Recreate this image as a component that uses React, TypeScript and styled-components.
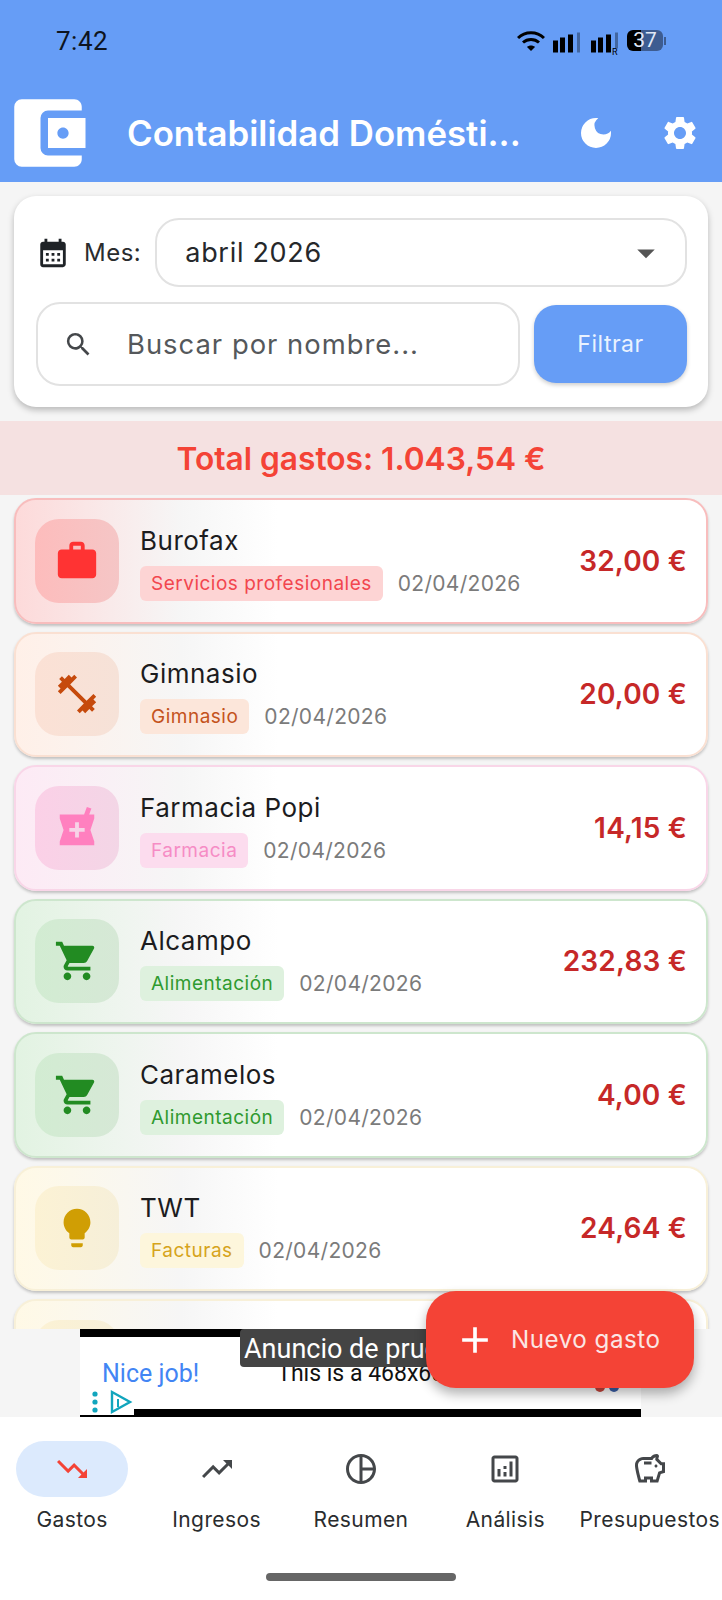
import styled, { createGlobalStyle } from "styled-components";
import {
    MdAccountBalanceWallet,
    MdAdd,
    MdArrowDropDown,
    MdCalendarMonth,
    MdDarkMode,
    MdFitnessCenter,
    MdLightbulb,
    MdLocalPharmacy,
    MdOutlineAnalytics,
    MdOutlinePieChart,
    MdOutlineSavings,
    MdSearch,
    MdSettings,
    MdShoppingCart,
    MdTrendingDown,
    MdTrendingUp,
    MdWork,
} from "react-icons/md";
import type { IconType } from "react-icons";

const GlobalStyle = createGlobalStyle`
    html, body {
        margin: 0;
        padding: 0;
        background: #ffffff;
        font-family: "Inter", "Liberation Sans", sans-serif;
    }
    * {
        box-sizing: border-box;
    }
`;

type Tint = {
    start: string;
    border: string;
    tile: string;
    tileEnd: string;
    icon: string;
    tag: string;
    tagText: string;
};

const red: Tint = { start: "#fddada", border: "#f8bdbd", tile: "#fdbcbc", tileEnd: "#f5c6c6", icon: "#ff3333", tag: "#fdd4d4", tagText: "#f2464e" };
const orange: Tint = { start: "#fff0e8", border: "#fae0d2", tile: "#fbe1d5", tileEnd: "#f6e2d8", icon: "#c64a0c", tag: "#fce6da", tagText: "#c4531c" };
const pink: Tint = { start: "#fdeaf5", border: "#f9d6e8", tile: "#fbd0e7", tileEnd: "#f3d6e6", icon: "#ff80bf", tag: "#fcdcee", tagText: "#f68cc5" };
const green: Tint = { start: "#e2f3e2", border: "#cde6cd", tile: "#d2ecd2", tileEnd: "#d6e8d6", icon: "#228b22", tag: "#def1de", tagText: "#2f9a2f" };
const yellow: Tint = { start: "#fff9e6", border: "#f8f0d8", tile: "#fcf2d4", tileEnd: "#f6efd9", icon: "#d09e04", tag: "#fdf6dc", tagText: "#d6a41c" };

const expenses = [
    { name: "Burofax", category: "Servicios profesionales", date: "02/04/2026", amount: "32,00 €", tint: red, Icon: MdWork },
    { name: "Gimnasio", category: "Gimnasio", date: "02/04/2026", amount: "20,00 €", tint: orange, Icon: MdFitnessCenter },
    { name: "Farmacia Popi", category: "Farmacia", date: "02/04/2026", amount: "14,15 €", tint: pink, Icon: MdLocalPharmacy },
    { name: "Alcampo", category: "Alimentación", date: "02/04/2026", amount: "232,83 €", tint: green, Icon: MdShoppingCart },
    { name: "Caramelos", category: "Alimentación", date: "02/04/2026", amount: "4,00 €", tint: green, Icon: MdShoppingCart },
    { name: "TWT", category: "Facturas", date: "02/04/2026", amount: "24,64 €", tint: yellow, Icon: MdLightbulb },
    { name: "", category: "", date: "", amount: "", tint: yellow, Icon: MdLightbulb },
];

const tabs: { label: string; Icon: IconType; active?: boolean }[] = [
    { label: "Gastos", Icon: MdTrendingDown, active: true },
    { label: "Ingresos", Icon: MdTrendingUp },
    { label: "Resumen", Icon: MdOutlinePieChart },
    { label: "Análisis", Icon: MdOutlineAnalytics },
    { label: "Presupuestos", Icon: MdOutlineSavings },
];

export default function App(): JSX.Element {
    return (
        <Page>
            <GlobalStyle />
            <Header>
                <StatusBar>
                    <Clock>7:42</Clock>
                    <StatusIcons>
                        <svg width="28" height="22" viewBox="0 0 28 22">
                            <path d="M1 8 C8 1 20 1 27 8" stroke="#000" strokeWidth="3" fill="none" />
                            <path d="M6 12.5 C10.5 8.5 17.5 8.5 22 12.5" stroke="#000" strokeWidth="3" fill="none" />
                            <path d="M10 17 L14 21 L18 17 C16 15 12 15 10 17 Z" fill="#000" />
                        </svg>
                        <SignalBars />
                        <SignalBars roaming />
                        <Battery>37</Battery>
                        <BatteryCap />
                    </StatusIcons>
                </StatusBar>
                <AppBar>
                    <LogoSlot>
                        <MdAccountBalanceWallet size={90} color="#fff" />
                    </LogoSlot>
                    <Title>Contabilidad Domésti...</Title>
                    <BarAction>
                        <MdDarkMode size={40} color="#fff" />
                    </BarAction>
                    <BarAction>
                        <MdSettings size={40} color="#fff" />
                    </BarAction>
                </AppBar>
            </Header>

            <Content>
                <FilterCard>
                    <MonthRow>
                        <MdCalendarMonth size={34} color="#1f2327" />
                        <MonthLabel>Mes:</MonthLabel>
                        <MonthSelect>
                            <span>abril 2026</span>
                            <MdArrowDropDown size={42} color="#555" />
                        </MonthSelect>
                    </MonthRow>
                    <SearchRow>
                        <SearchBox>
                            <MdSearch size={31} color="#44474a" />
                            <SearchHint>Buscar por nombre...</SearchHint>
                        </SearchBox>
                        <FilterButton>Filtrar</FilterButton>
                    </SearchRow>
                </FilterCard>

                <TotalBand>Total gastos: 1.043,54 €</TotalBand>

                <ExpenseList>
                    {expenses.map((e, i) => (
                        <ExpenseCard key={i} $tint={e.tint}>
                            <IconTile $tint={e.tint}>
                                <e.Icon size={46} color={e.tint.icon} />
                            </IconTile>
                            <ExpenseInfo>
                                <ExpenseName>{e.name}</ExpenseName>
                                <MetaRow>
                                    <CategoryTag $tint={e.tint}>{e.category}</CategoryTag>
                                    <DateText>{e.date}</DateText>
                                </MetaRow>
                            </ExpenseInfo>
                            <Amount>{e.amount}</Amount>
                        </ExpenseCard>
                    ))}
                </ExpenseList>

                <AdBanner>
                    <AdInner>
                        <AdHeadline>Nice job!</AdHeadline>
                        <AdCopy>This is a 468x60 test ad.</AdCopy>
                        <AdTooltip>Anuncio de prueba</AdTooltip>
                        <AdMark>
                            <svg width="26" height="12" viewBox="0 0 26 12">
                                <circle cx="6" cy="6" r="5" fill="#c8453c" />
                                <circle cx="20" cy="6" r="5" fill="#3c5fa8" />
                            </svg>
                        </AdMark>
                        <AdChoices>
                            <svg width="54" height="30" viewBox="0 0 54 30">
                                <circle cx="15" cy="9" r="2.6" fill="#11a5bd" />
                                <circle cx="15" cy="17" r="2.6" fill="#11a5bd" />
                                <circle cx="15" cy="25" r="2.6" fill="#11a5bd" />
                                <path d="M32 7 L50 17 L32 27 Z" fill="none" stroke="#11a5bd" strokeWidth="2.4" />
                                <rect x="37" y="14" width="2" height="8" fill="#11a5bd" />
                            </svg>
                        </AdChoices>
                    </AdInner>
                </AdBanner>
            </Content>

            <BottomNav>
                {tabs.map((t) => (
                    <NavItem key={t.label}>
                        <NavIcon $active={t.active}>
                            <t.Icon size={36} color={t.active ? "#f44336" : "#44474a"} />
                        </NavIcon>
                        <NavLabel>{t.label}</NavLabel>
                    </NavItem>
                ))}
            </BottomNav>
            <HomeBar />

            <Fab>
                <MdAdd size={44} color="#fff" />
                <span>Nuevo gasto</span>
            </Fab>
        </Page>
    );
}

function SignalBars({ roaming }: { roaming?: boolean }): JSX.Element {
    return (
        <svg width="30" height="30" viewBox="0 0 30 30">
            <rect x="0" y="14.5" width="5" height="12" fill="#000" />
            <rect x="7" y="11.5" width="5" height="15" fill="#000" />
            <rect x="15" y="8.5" width="5" height="18" fill="#000" />
            <rect x="24" y="6.5" width="3" height={roaming ? 16 : 20} fill="#000" opacity="0.35" />
            {roaming && (
                <text x="21" y="29" fontSize="9" fontFamily="Roboto, sans-serif" fill="#000">
                    R
                </text>
            )}
        </svg>
    );
}

const Page = styled.div`
    position: relative;
    width: 722px;
    height: 1600px;
    display: flex;
    flex-direction: column;
    overflow: hidden;
    background: #ffffff;
`;

const Header = styled.header`
    height: 182px;
    flex: none;
    background: #669df6;
`;

const StatusBar = styled.div`
    height: 86px;
    padding: 0 56px 5px 56px;
    display: flex;
    align-items: center;
    justify-content: space-between;
`;

const Clock = styled.span`
    font-family: "Roboto", sans-serif;
    font-size: 26px;
    letter-spacing: 0.5px;
    color: #0d1420;
`;

const StatusIcons = styled.div`
    display: flex;
    align-items: center;
    gap: 8px;
`;

const Battery = styled.div`
    width: 36px;
    height: 21px;
    margin-left: -2px;
    border-radius: 6px;
    background: linear-gradient(90deg, #000000 0 38%, #3d5c91 38% 100%);
    color: #dfe8f7;
    font-family: "Roboto", sans-serif;
    font-size: 21px;
    line-height: 21px;
    text-align: center;
`;

const BatteryCap = styled.div`
    width: 2px;
    height: 8px;
    margin-left: -7px;
    background: #3d5c91;
`;

const AppBar = styled.div`
    height: 93px;
    display: flex;
    align-items: center;
`;

const LogoSlot = styled.div`
    width: 90px;
    height: 90px;
    margin-left: 3px;
    flex: none;
    display: flex;
`;

const Title = styled.h1`
    flex: 1;
    margin: 0 0 0 34px;
    font-size: 34.8px;
    font-weight: 600;
    color: #ffffff;
    white-space: nowrap;
`;

const BarAction = styled.div`
    width: 84px;
    display: flex;
    justify-content: center;
`;

const Content = styled.main`
    flex: 1;
    min-height: 0;
    display: flex;
    flex-direction: column;
    background: #f5f5f5;
`;

const FilterCard = styled.section`
    flex: none;
    margin: 14px 14px 14px;
    height: 211px;
    padding: 22px 21px 0 22px;
    background: #ffffff;
    border-radius: 22px;
    box-shadow: 0 3px 6px rgba(0, 0, 0, 0.25);
    display: flex;
    flex-direction: column;
    gap: 15px;
`;

const MonthRow = styled.div`
    display: flex;
    align-items: center;
    height: 69px;
`;

const MonthLabel = styled.span`
    margin: 0 14px 0 14px;
    font-size: 24px;
    letter-spacing: 0.5px;
    color: #2a2c2e;
`;

const MonthSelect = styled.div`
    flex: 1;
    height: 69px;
    padding: 0 18px 0 28px;
    display: flex;
    align-items: center;
    justify-content: space-between;
    border: 2px solid #e2e2e2;
    border-radius: 24px;
    font-size: 27px;
    letter-spacing: 0.7px;
    color: #26282b;
`;

const SearchRow = styled.div`
    display: flex;
    align-items: center;
    gap: 14px;
`;

const SearchBox = styled.div`
    flex: 1;
    height: 84px;
    padding: 0 26px 0 25px;
    display: flex;
    align-items: center;
    gap: 33px;
    border: 2px solid #e2e2e2;
    border-radius: 24px;
`;

const SearchHint = styled.span`
    font-size: 27.4px;
    letter-spacing: 1px;
    color: #55585b;
`;

const FilterButton = styled.div`
    width: 153px;
    height: 78px;
    display: flex;
    align-items: center;
    justify-content: center;
    background: #669df6;
    border-radius: 22px;
    box-shadow: 0 2px 4px rgba(0, 0, 0, 0.2);
    color: #eaf2ff;
    font-size: 23px;
    letter-spacing: 0.5px;
`;

const TotalBand = styled.div`
    flex: none;
    height: 74px;
    display: flex;
    align-items: center;
    justify-content: center;
    background: #f5e1e1;
    color: #f44336;
    font-size: 31.7px;
    font-weight: 600;
`;

const ExpenseList = styled.div`
    flex: 1;
    min-height: 0;
    overflow: hidden;
    padding: 3px 14px 0;
    display: flex;
    flex-direction: column;
    gap: 8px;
`;

const ExpenseCard = styled.article<{ $tint: Tint }>`
    flex: none;
    height: 125.5px;
    padding: 0 19px 0 19px;
    display: flex;
    align-items: center;
    background: linear-gradient(90deg, ${(p) => p.$tint.start} 0%, #f6f6f6 24%, #ffffff 38%);
    border: 2px solid ${(p) => p.$tint.border};
    border-radius: 22px;
    box-shadow: 0 2px 3px rgba(0, 0, 0, 0.22);
`;

const IconTile = styled.div<{ $tint: Tint }>`
    width: 84px;
    height: 84px;
    flex: none;
    display: flex;
    align-items: center;
    justify-content: center;
    border-radius: 24px;
    background: linear-gradient(90deg, ${(p) => p.$tint.tile}, ${(p) => p.$tint.tileEnd});
`;

const ExpenseInfo = styled.div`
    flex: 1;
    min-width: 0;
    margin: 4px 0 0 21px;
    display: flex;
    flex-direction: column;
    gap: 9px;
`;

const ExpenseName = styled.div`
    min-height: 32px;
    font-size: 26px;
    line-height: 32px;
    letter-spacing: 0.5px;
    color: #1c1c1e;
`;

const MetaRow = styled.div`
    display: flex;
    align-items: center;
    gap: 15px;
`;

const CategoryTag = styled.span<{ $tint: Tint }>`
    height: 35px;
    padding: 0 11px;
    display: flex;
    align-items: center;
    border-radius: 6px;
    background: ${(p) => p.$tint.tag};
    color: ${(p) => p.$tint.tagText};
    font-size: 19px;
    letter-spacing: 0.5px;
    white-space: nowrap;
`;

const DateText = styled.span`
    font-size: 21px;
    letter-spacing: 0.3px;
    color: #7b7b7b;
    white-space: nowrap;
`;

const Amount = styled.div`
    font-size: 28px;
    font-weight: 600;
    letter-spacing: 0.2px;
    color: #c62828;
    white-space: nowrap;
`;

const AdBanner = styled.div`
    flex: none;
    height: 88px;
    display: flex;
    justify-content: center;
    background: #f5f5f5;
    padding-right: 1px;
`;

const AdInner = styled.div`
    position: relative;
    width: 561px;
    height: 88px;
    background: #ffffff;
    border-top: 8px solid #000000;
    border-bottom: 8px solid #000000;
    display: flex;
    align-items: center;
    font-family: "Roboto", sans-serif;
`;

const AdHeadline = styled.span`
    margin-left: 22px;
    font-size: 25px;
    color: #4285f4;
`;

const AdCopy = styled.span`
    margin-left: 78px;
    font-size: 23px;
    color: #111111;
    white-space: nowrap;
`;

const AdTooltip = styled.div`
    position: absolute;
    left: 160px;
    top: -8px;
    height: 38px;
    padding: 0 4px;
    background: #444444;
    border-radius: 4px;
    color: #ffffff;
    font-size: 27px;
    line-height: 40px;
    white-space: nowrap;
`;

const AdMark = styled.div`
    position: absolute;
    left: 514px;
    top: 44px;
    display: flex;
`;

const AdChoices = styled.div`
    position: absolute;
    left: 0;
    bottom: -6px;
    width: 54px;
    height: 30px;
    background: #ffffff;
    display: flex;
`;

const BottomNav = styled.nav`
    flex: none;
    height: 124px;
    padding-top: 24px;
    display: grid;
    grid-template-columns: repeat(5, 1fr);
    background: #ffffff;
`;

const NavItem = styled.div`
    display: flex;
    flex-direction: column;
    align-items: center;
    gap: 10px;
`;

const NavIcon = styled.div<{ $active?: boolean }>`
    width: 112px;
    height: 56px;
    display: flex;
    align-items: center;
    justify-content: center;
    border-radius: 28px;
    background: ${(p) => (p.$active ? "#dceafd" : "transparent")};
`;

const NavLabel = styled.span`
    font-size: 21px;
    letter-spacing: 0.4px;
    color: #2a2c2e;
    white-space: nowrap;
`;

const HomeBar = styled.div`
    width: 190px;
    height: 8px;
    margin: 32px auto 19px;
    flex: none;
    border-radius: 4px;
    background: #666666;
`;

const Fab = styled.div`
    position: absolute;
    right: 28px;
    top: 1291px;
    width: 268px;
    height: 97px;
    padding-left: 27px;
    display: flex;
    align-items: center;
    gap: 14px;
    background: #f44336;
    border-radius: 30px;
    box-shadow: 0 6px 12px rgba(0, 0, 0, 0.3);
    color: #fbe6e4;
    font-size: 24.2px;
    letter-spacing: 0.5px;
`;
